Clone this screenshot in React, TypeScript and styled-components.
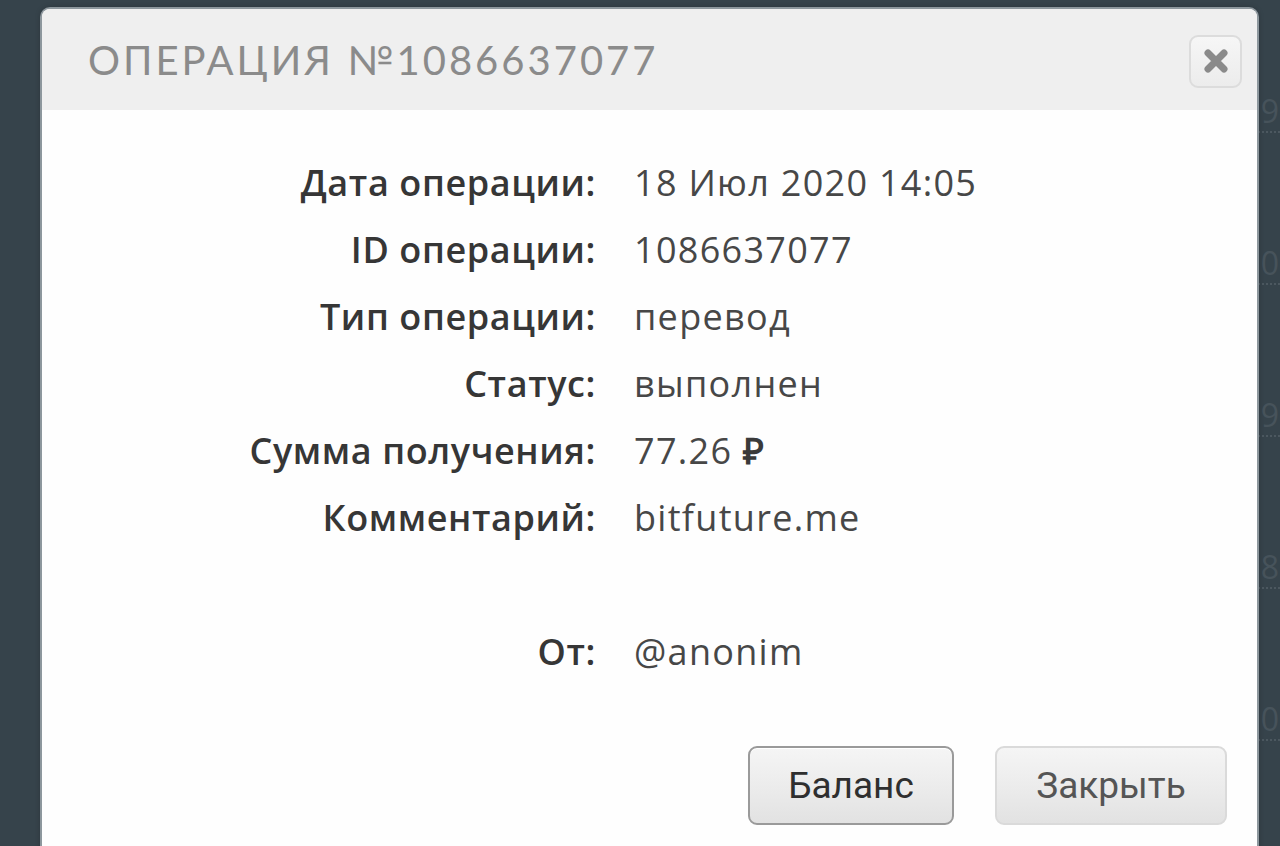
import styled, { createGlobalStyle } from 'styled-components'

const GlobalStyle = createGlobalStyle`
	html, body {
		margin: 0;
		padding: 0;
		height: 100%;
		overflow: hidden;
		background: #36434b;
	}
	#root {
		height: 100%;
	}
`

const Page = styled.div`
	position: relative;
	height: 846px;
	overflow: hidden;
	background: #36434b;
`

const BackList = styled.ul`
	list-style: none;
	margin: 0;
	padding: 0;
`

const BackRow = styled.li`
	height: 152px;
	box-sizing: border-box;
	display: flex;
	justify-content: flex-end;
	align-items: flex-end;
	padding: 0 1px 4px 0;
	border-bottom: 2px dotted #4c5860;
	margin-left: 1250px;
	font-family: 'Open Sans', sans-serif;
	font-size: 32px;
	line-height: 1;
	color: #47535b;

	&:first-child {
		height: 133px;
	}
`

const Modal = styled.div`
	position: absolute;
	left: 42px;
	top: 9px;
	width: 1215px;
	height: 900px;
	background: #fefefe;
	border-radius: 8px 8px 0 0;
	box-shadow: 0 0 0 2px #8d979d, 0 0 6px rgba(0, 0, 0, 0.4);
	display: flex;
	flex-direction: column;
`

const Header = styled.div`
	height: 101px;
	background: #efefef;
	border-radius: 8px 8px 0 0;
	display: flex;
	align-items: center;
	justify-content: space-between;
	padding: 0 15px 0 46px;
`

const Title = styled.h2`
	margin: 0;
	font-family: 'Lato', sans-serif;
	font-weight: 400;
	font-size: 40px;
	letter-spacing: 3px;
	color: #8b8b8b;
`

const CloseButton = styled.button`
	width: 53px;
	height: 53px;
	border: 2px solid #dcdcdc;
	border-radius: 9px;
	background: linear-gradient(#f6f6f6, #ececec);
	display: flex;
	align-items: center;
	justify-content: center;
	padding: 0;
	margin-top: 3px;
`

const Details = styled.dl`
	margin: 0;
	padding: 39px 0 0;
	display: grid;
	grid-template-columns: 554px 1fr;
	column-gap: 38px;
	grid-auto-rows: 67px;
	align-items: center;
`

const Label = styled.dt`
	text-align: right;
	font-family: 'Open Sans', sans-serif;
	font-weight: 600;
	font-size: 36px;
	letter-spacing: 0.6px;
	color: #363636;
`

const Value = styled.dd`
	margin: 0;
	font-family: 'Open Sans', sans-serif;
	font-weight: 400;
	font-size: 36px;
	color: #474747;
	letter-spacing: 1.3px;
`

const Rouble = styled.span`
	font-weight: 700;
	color: #3a3a3a;
`

const Spacer = styled.div`
	grid-column: 1 / -1;
`

const Actions = styled.div`
	display: flex;
	justify-content: flex-end;
	gap: 41px;
	padding: 61px 30px 0 0;
`

const ActionButton = styled.button<{ $primary?: boolean }>`
	height: 79px;
	width: ${({ $primary }) => ($primary ? '206px' : '232px')};
	border-radius: 9px;
	border: 2px solid ${({ $primary }) => ($primary ? '#9a9a9a' : '#dadada')};
	background: linear-gradient(#f5f5f5 0%, #ececec 50%, #e2e2e2 100%);
	font-family: Roboto, 'Liberation Sans', sans-serif;
	font-size: 37px;
	color: ${({ $primary }) => ($primary ? '#2f2f2f' : '#555555')};
	padding: 0;
	box-shadow: ${({ $primary }) => ($primary ? 'inset 0 1px 0 #fff' : 'none')};
`

const rows = [
	['Дата операции:', '18 Июл 2020 14:05'],
	['ID операции:', '1086637077'],
	['Тип операции:', 'перевод'],
	['Статус:', 'выполнен'],
]

export default function App() {
	return (
		<Page>
			<GlobalStyle />
			<BackList>
				<BackRow>9</BackRow>
				<BackRow>0</BackRow>
				<BackRow>9</BackRow>
				<BackRow>8</BackRow>
				<BackRow>0</BackRow>
			</BackList>

			<Modal role="dialog" aria-label="Операция №1086637077">
				<Header>
					<Title>ОПЕРАЦИЯ №1086637077</Title>
					<CloseButton aria-label="Закрыть">
						<svg width="26" height="26" viewBox="0 0 26 26">
							<path
								d="M5 5 L21 21 M21 5 L5 21"
								stroke="#8a8a8a"
								strokeWidth="7"
								strokeLinecap="round"
							/>
						</svg>
					</CloseButton>
				</Header>

				<Details>
					{rows.map(([label, value]) => (
						<>
							<Label key={label}>{label}</Label>
							<Value>{value}</Value>
						</>
					))}
					<Label>Сумма получения:</Label>
					<Value>
						77.26 <Rouble>₽</Rouble>
					</Value>
					<Label>Комментарий:</Label>
					<Value>bitfuture.me</Value>
					<Spacer />
					<Label>От:</Label>
					<Value>@anonim</Value>
				</Details>

				<Actions>
					<ActionButton $primary>Баланс</ActionButton>
					<ActionButton>Закрыть</ActionButton>
				</Actions>
			</Modal>
		</Page>
	)
}
